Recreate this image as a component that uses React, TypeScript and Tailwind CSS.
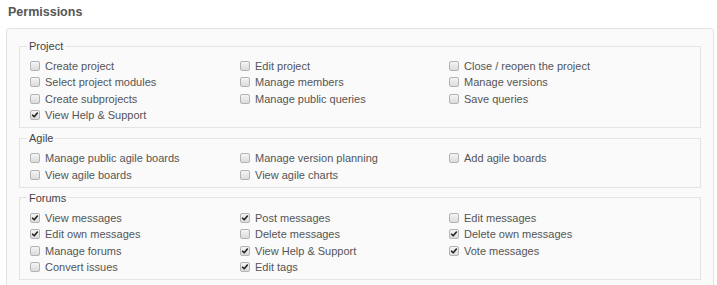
import React from "react";

type Item = { label: string; checked?: boolean };

const groups: { title: string; cols: Item[][] }[] = [
  {
    title: "Project",
    cols: [
      [
        { label: "Create project" },
        { label: "Select project modules" },
        { label: "Create subprojects" },
        { label: "View Help & Support", checked: true },
      ],
      [
        { label: "Edit project" },
        { label: "Manage members" },
        { label: "Manage public queries" },
      ],
      [
        { label: "Close / reopen the project" },
        { label: "Manage versions" },
        { label: "Save queries" },
      ],
    ],
  },
  {
    title: "Agile",
    cols: [
      [{ label: "Manage public agile boards" }, { label: "View agile boards" }],
      [{ label: "Manage version planning" }, { label: "View agile charts" }],
      [{ label: "Add agile boards" }],
    ],
  },
  {
    title: "Forums",
    cols: [
      [
        { label: "View messages", checked: true },
        { label: "Edit own messages", checked: true },
        { label: "Manage forums" },
        { label: "Convert issues" },
      ],
      [
        { label: "Post messages", checked: true },
        { label: "Delete messages" },
        { label: "View Help & Support", checked: true },
        { label: "Edit tags", checked: true },
      ],
      [
        { label: "Edit messages" },
        { label: "Delete own messages", checked: true },
        { label: "Vote messages", checked: true },
      ],
    ],
  },
];

function Box({ checked }: { checked?: boolean }) {
  return (
    <span className="relative w-[10px] h-[10px] mr-[5px] shrink-0 rounded-[2px] border border-[#b4b4b4] bg-gradient-to-b from-[#f4f4f4] to-[#dcdcdc]">
      {checked && (
        <svg
          className="absolute left-[0px] top-[0px]"
          width="8"
          height="8"
          viewBox="0 0 8 8"
        >
          <path
            d="M1.6 4.2 L3.2 5.8 L6.4 2"
            fill="none"
            stroke="#222"
            strokeWidth="1.6"
            strokeLinecap="round"
            strokeLinejoin="round"
          />
        </svg>
      )}
    </span>
  );
}

export default function App() {
  return (
    <div className="w-[717px] h-[285px] overflow-hidden bg-white font-['Liberation_Sans',Arial,sans-serif]">
      <h3 className="pl-[8px] pt-[5px] text-[12.5px] leading-[15px] font-bold text-[#555]">
        Permissions
      </h3>
      <div className="ml-[6px] mt-[8px] w-[708px] rounded-[3px] border border-[#e2e2e2] bg-[#fafafa] px-[12px] pt-[10px] pb-[8px]">
        {groups.map((g) => (
          <fieldset
            key={g.title}
            className="mb-[3px] border border-[#e4e4e4] px-[10px] pb-[4px]"
          >
            <legend className="ml-[-3px] px-[2px] text-[11px] leading-[14px] text-[#444]">
              {g.title}
            </legend>
            <div className="grid grid-cols-[210px_209px_1fr] pt-[5px]">
              {g.cols.map((col, ci) => (
                <div key={ci} className="flex flex-col">
                  {col.map((it) => (
                    <label
                      key={it.label}
                      className="flex h-[16.33px] items-center text-[11px] text-[#555]"
                    >
                      <Box checked={it.checked} />
                      <span>{it.label}</span>
                    </label>
                  ))}
                </div>
              ))}
            </div>
          </fieldset>
        ))}
      </div>
    </div>
  );
}
